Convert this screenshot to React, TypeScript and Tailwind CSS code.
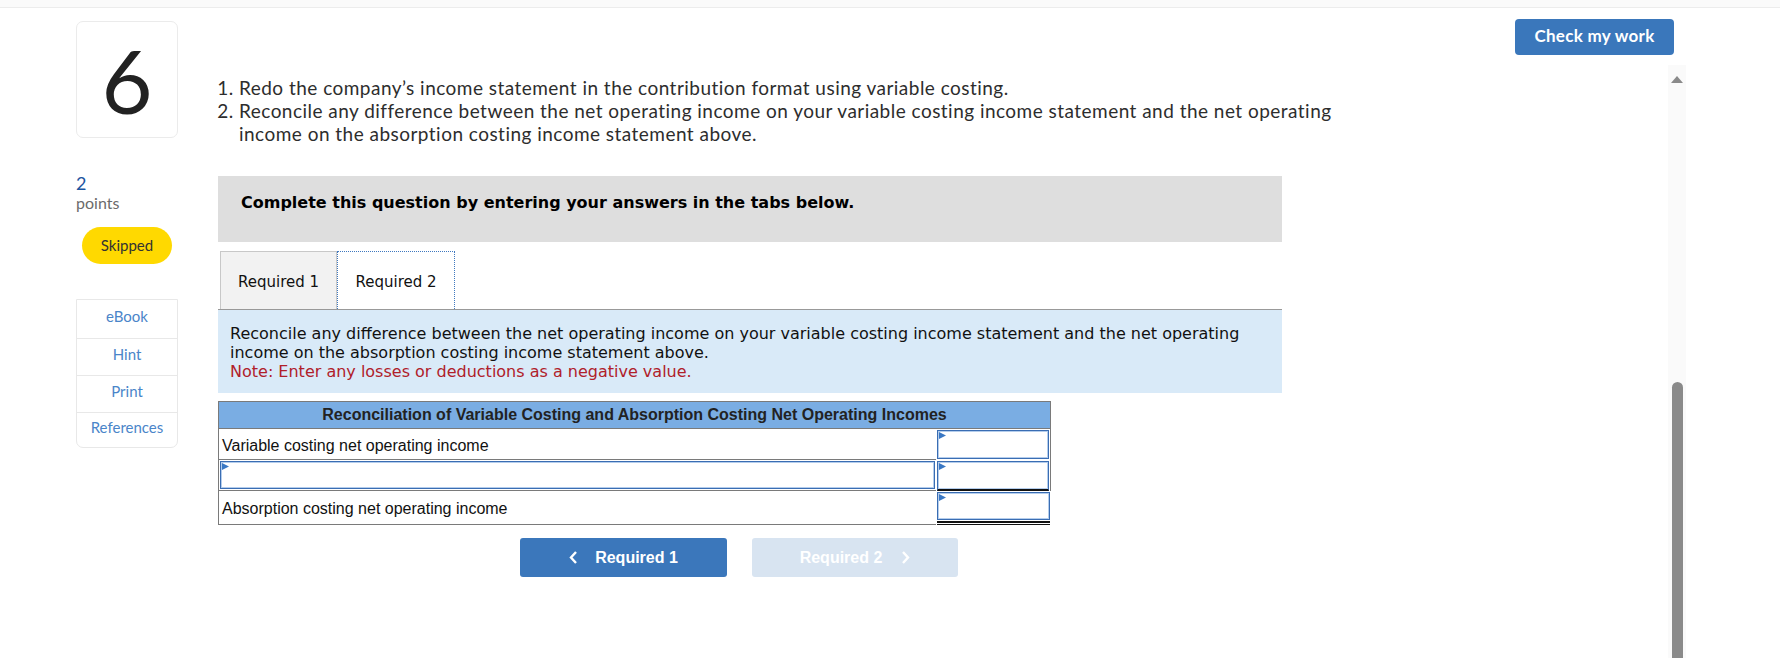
import React from 'react';

const Flag: React.FC = () => (
  <svg className="absolute left-[1px] top-[1px]" width="7" height="7" viewBox="0 0 7 7">
    <polygon points="0,0 7,3.5 0,7" fill="#3a78c4" />
  </svg>
);

const App: React.FC = () => {
  const nav = [
    { label: 'eBook', h: 'h-[38px]' },
    { label: 'Hint', h: 'h-[37px]' },
    { label: 'Print', h: 'h-[37px]' },
    { label: 'References', h: 'h-[35px]' },
  ];

  return (
    <div className="w-[1780px] h-[658px] bg-white overflow-hidden flex flex-col font-['Lato',sans-serif]">
      {/* top strip */}
      <div className="h-[8px] shrink-0 bg-[#fafafa] border-b border-[#ececec]" />

      <div className="flex flex-1 min-h-0">
        {/* left column */}
        <div className="ml-[76px] w-[102px] shrink-0 pt-[13px]">
          <div className="h-[117px] border border-[#ebebeb] rounded-[7px] flex items-center justify-center">
            <span className="text-[88px] leading-none text-[#222]">6</span>
          </div>
          <div className="mt-[34px] text-[18px] leading-[22px] text-[#1d55a0]">2</div>
          <div className="text-[16px] leading-[18px] text-[#6b6b6b]">points</div>
          <div className="mt-[15px] ml-[6px] w-[90px] h-[37px] rounded-full bg-[#ffd900] flex items-center justify-center text-[15px] text-[#333]">
            Skipped
          </div>
          <div className="mt-[35px] border border-[#e8e8e8] rounded-b-[7px]">
            {nav.map((n, i) => (
              <div
                key={n.label}
                className={`${n.h} pb-[5px] flex items-center justify-center text-[15px] text-[#4a85c9] ${i > 0 ? 'border-t border-[#e8e8e8]' : ''}`}
              >
                {n.label}
              </div>
            ))}
          </div>
        </div>

        {/* question content */}
        <div className="ml-[40px] w-[1064px] shrink-0">
          <ol className="mt-[68px] list-decimal pl-[21px] whitespace-nowrap text-[19px] leading-[23px] tracking-[0.47px] text-[#2d2d2d]">
            <li>Redo the company’s income statement in the contribution format using variable costing.</li>
            <li>
              Reconcile any difference between the net operating income on your variable costing income statement and the net operating
              <br />
              income on the absorption costing income statement above.
            </li>
          </ol>

          <div className="mt-[31px] h-[66px] bg-[#dedede] pl-[23px] pt-[16px] font-['DejaVu_Sans',sans-serif] font-bold text-[16px] leading-[22px] text-black">
            Complete this question by entering your answers in the tabs below.
          </div>

          {/* tabs */}
          <div className="mt-[9px] flex border-b border-[#999] font-['DejaVu_Sans',sans-serif] text-[15px] text-[#111]">
            <div className="ml-[2px] w-[117px] h-[58px] pt-[3px] bg-[#f2f2f2] border border-b-0 border-[#c8c8c8] flex items-center justify-center">
              Required 1
            </div>
            <div className="w-[118px] h-[58px] pt-[3px] -mb-px bg-white border border-dotted border-b-0 border-[#3f78bf] flex items-center justify-center">
              Required 2
            </div>
          </div>

          <div className="bg-[#d9eaf8] px-[12px] pt-[14px] pb-[12px] font-['DejaVu_Sans',sans-serif] text-[16px] leading-[19px] text-[#111]">
            Reconcile any difference between the net operating income on your variable costing income statement and the net operating
            <br />
            income on the absorption costing income statement above.
            <div className="text-[#b0202a]">Note: Enter any losses or deductions as a negative value.</div>
          </div>

          {/* reconciliation table */}
          <div className="mt-[8px] w-[833px] font-['Liberation_Sans',Arial,sans-serif] text-[16px] text-[#111]">
            <div className="h-[28px] bg-[#7aade3] border border-[#7a7a7a] flex items-center justify-center font-bold text-[#222]">
              Reconciliation of Variable Costing and Absorption Costing Net Operating Incomes
            </div>
            <div className="flex h-[31px]">
              <div className="w-[718px] border-l border-b border-[#7a7a7a] pl-[3px] pt-[3px] flex items-center">
                Variable costing net operating income
              </div>
              <div className="flex-1 p-px border-r border-[#7a7a7a]">
                <div className="relative h-full border border-[#3a6db3] shadow-[inset_0_0_0_1px_#b4cdec] bg-white">
                  <Flag />
                </div>
              </div>
            </div>
            <div className="flex h-[31px]">
              <div className="w-[718px] border-l border-b border-[#7a7a7a] p-px">
                <div className="relative h-full border border-[#3a6db3] shadow-[inset_0_0_0_1px_#b4cdec] bg-white">
                  <Flag />
                </div>
              </div>
              <div className="flex-1 px-px pt-px border-r border-[#7a7a7a]">
                <div className="relative h-full border border-[#3a6db3] border-b-2 border-b-[#111] shadow-[inset_0_0_0_1px_#b4cdec] bg-white">
                  <Flag />
                </div>
              </div>
            </div>
            <div className="flex h-[34px]">
              <div className="w-[718px] border-l border-b border-[#7a7a7a] pl-[3px] pt-[2px] flex items-center">
                Absorption costing net operating income
              </div>
              <div className="flex-1 px-px pt-px flex flex-col">
                <div className="relative flex-1 border border-[#3a6db3] shadow-[inset_0_0_0_1px_#b4cdec] bg-white">
                  <Flag />
                </div>
                <div className="h-[4px] border-t-2 border-b border-[#111] mt-px" />
              </div>
            </div>
          </div>

          {/* nav buttons */}
          <div className="mt-[13px] ml-[302px] flex gap-[25px] font-['Liberation_Sans',Arial,sans-serif] font-bold text-[16px] text-white">
            <div className="w-[207px] h-[39px] rounded-[3px] bg-[#3b77bb] flex items-center justify-center gap-[18px]">
              <svg width="8" height="13" viewBox="0 0 8 13" fill="none" stroke="white" strokeWidth="2.4">
                <polyline points="7,1 2,6.5 7,12" />
              </svg>
              <span>Required 1</span>
            </div>
            <div className="w-[206px] h-[39px] rounded-[3px] bg-[#d8e4f1] flex items-center justify-center gap-[20px]">
              <span>Required 2</span>
              <svg width="8" height="13" viewBox="0 0 8 13" fill="none" stroke="white" strokeWidth="2.4">
                <polyline points="1,1 6,6.5 1,12" />
              </svg>
            </div>
          </div>
        </div>

        {/* right side: check button + scrollbar */}
        <div className="flex-1 flex flex-col">
          <div className="mt-[11px] ml-[233px] w-[159px] h-[36px] pb-[3px] rounded-[4px] bg-[#3a77bb] flex items-center justify-center text-white font-bold text-[17px] tracking-[0.3px]">
            Check my work
          </div>
          <div className="mt-[10px] ml-[386px] w-[18px] flex-1 bg-[#fafafa] flex flex-col items-center">
            <svg className="mt-[11px]" width="12" height="7" viewBox="0 0 12 7">
              <polygon points="6,0 12,7 0,7" fill="#8a8a8a" />
            </svg>
            <div className="mt-[299px] w-[11px] flex-1 rounded-t-full bg-[#8a8a8a]" />
          </div>
        </div>
      </div>
    </div>
  );
};

export default App;
